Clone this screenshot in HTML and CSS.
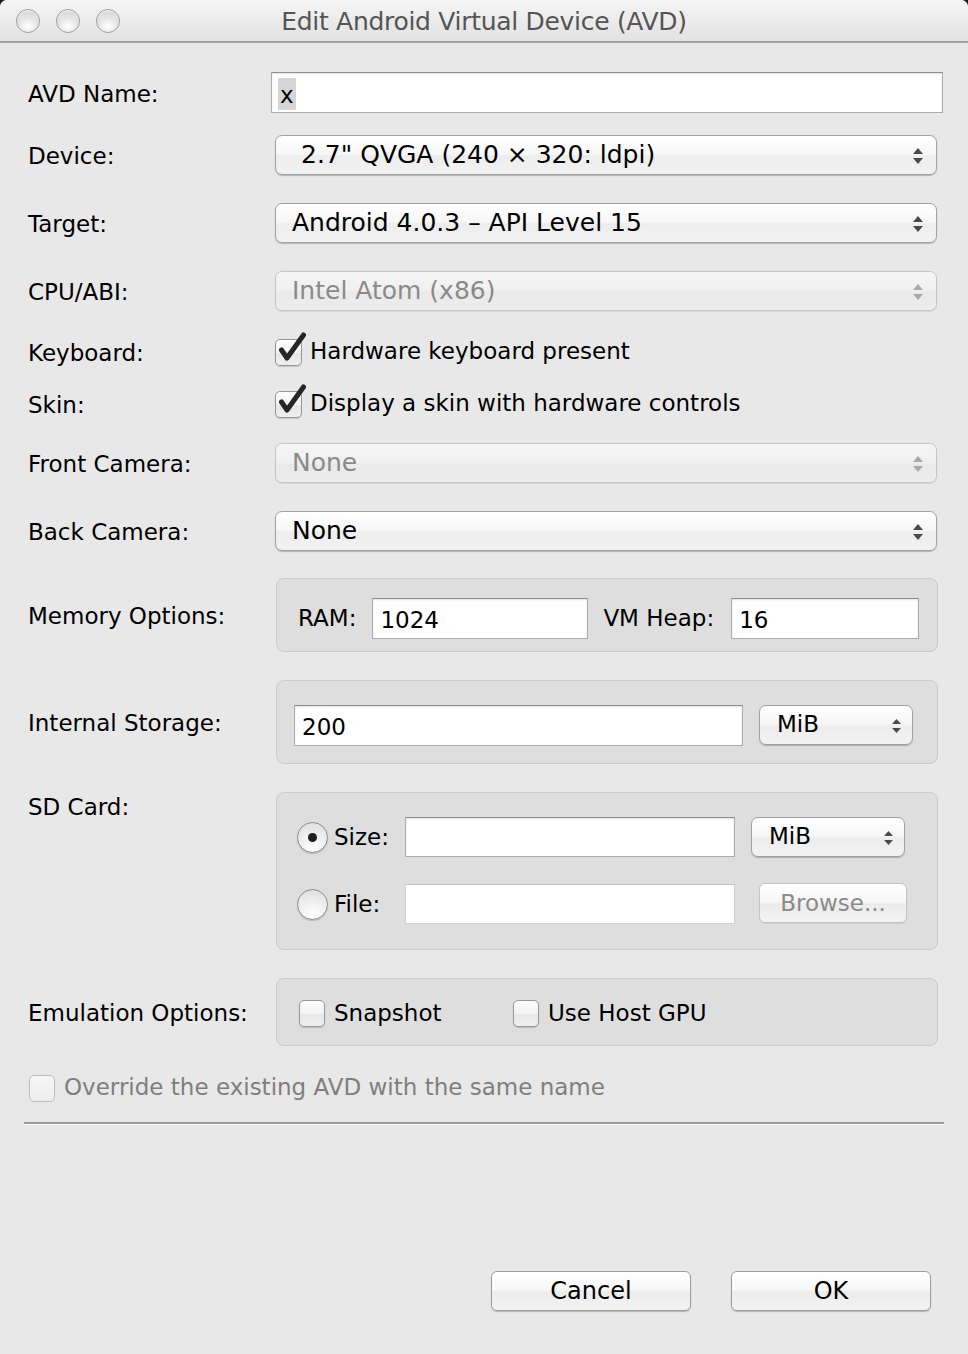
FILE: index.html
```html
<!DOCTYPE html>
<html>
<head>
<meta charset="utf-8">
<link rel="stylesheet" href="styles.css">
</head>
<body>
<div class="window">
  <div class="titlebar">
    <div class="lights"><span class="light"></span><span class="light"></span><span class="light"></span></div>
    <div class="title">Edit Android Virtual Device (AVD)</div>
  </div>
  <div class="content">
    <div class="row r-name">
      <div class="label">AVD Name:</div>
      <div class="field field-name"><span class="sel">x</span></div>
    </div>
    <div class="row r-device">
      <div class="label">Device:</div>
      <div class="select pad-device"><span class="stext">2.7" QVGA (240 × 320: ldpi)</span><svg class="arrows" width="10" height="16" viewBox="0 0 10 16"><path d="M5 0 L10 6 L0 6 Z M0 10 L10 10 L5 16 Z" fill="#4a4a4a"/></svg></div>
    </div>
    <div class="row r-target">
      <div class="label">Target:</div>
      <div class="select"><span class="stext">Android 4.0.3 – API Level 15</span><svg class="arrows" width="10" height="16" viewBox="0 0 10 16"><path d="M5 0 L10 6 L0 6 Z M0 10 L10 10 L5 16 Z" fill="#4a4a4a"/></svg></div>
    </div>
    <div class="row r-cpu">
      <div class="label">CPU/ABI:</div>
      <div class="select disabled"><span class="stext">Intel Atom (x86)</span><svg class="arrows" width="10" height="16" viewBox="0 0 10 16"><path d="M5 0 L10 6 L0 6 Z M0 10 L10 10 L5 16 Z" fill="#a9a9a9"/></svg></div>
    </div>
    <div class="row r-kbd">
      <div class="label">Keyboard:</div>
      <div class="check-item ci-checked"><span class="cbox checked"><svg class="tick" width="32" height="34" viewBox="0 0 32 34"><path d="M5.5 19 L11 27 L27.5 4" fill="none" stroke="#262626" stroke-width="5" stroke-linecap="round" stroke-linejoin="round"/></svg></span><span class="ctext">Hardware keyboard present</span></div>
    </div>
    <div class="row r-skin">
      <div class="label">Skin:</div>
      <div class="check-item ci-checked"><span class="cbox checked"><svg class="tick" width="32" height="34" viewBox="0 0 32 34"><path d="M5.5 19 L11 27 L27.5 4" fill="none" stroke="#262626" stroke-width="5" stroke-linecap="round" stroke-linejoin="round"/></svg></span><span class="ctext">Display a skin with hardware controls</span></div>
    </div>
    <div class="row r-front">
      <div class="label">Front Camera:</div>
      <div class="select disabled"><span class="stext">None</span><svg class="arrows" width="10" height="16" viewBox="0 0 10 16"><path d="M5 0 L10 6 L0 6 Z M0 10 L10 10 L5 16 Z" fill="#a9a9a9"/></svg></div>
    </div>
    <div class="row r-back">
      <div class="label">Back Camera:</div>
      <div class="select"><span class="stext">None</span><svg class="arrows" width="10" height="16" viewBox="0 0 10 16"><path d="M5 0 L10 6 L0 6 Z M0 10 L10 10 L5 16 Z" fill="#4a4a4a"/></svg></div>
    </div>
    <div class="row r-mem">
      <div class="label">Memory Options:</div>
      <div class="group g-mem">
        <span class="glabel">RAM:</span>
        <div class="field f-ram">1024</div>
        <span class="glabel l-heap">VM Heap:</span>
        <div class="field f-heap">16</div>
      </div>
    </div>
    <div class="row r-int">
      <div class="label">Internal Storage:</div>
      <div class="group g-int">
        <div class="field f-int">200</div>
        <div class="select small"><span class="stext">MiB</span><svg class="arrows" width="9" height="14" viewBox="0 0 9 14"><path d="M4.5 0 L9 5 L0 5 Z M0 9 L9 9 L4.5 14 Z" fill="#4a4a4a"/></svg></div>
      </div>
    </div>
    <div class="row r-sd">
      <div class="label l-top">SD Card:</div>
      <div class="group g-sd">
        <div class="sd-row">
          <span class="radio on"></span>
          <span class="glabel rl">Size:</span>
          <div class="field f-sd"></div>
          <div class="select small sd-sel"><span class="stext">MiB</span><svg class="arrows" width="9" height="14" viewBox="0 0 9 14"><path d="M4.5 0 L9 5 L0 5 Z M0 9 L9 9 L4.5 14 Z" fill="#4a4a4a"/></svg></div>
        </div>
        <div class="sd-row sd-row2">
          <span class="radio"></span>
          <span class="glabel rl">File:</span>
          <div class="field f-sd f-file"></div>
          <div class="button browse">Browse...</div>
        </div>
      </div>
    </div>
    <div class="row r-emu">
      <div class="label">Emulation Options:</div>
      <div class="group g-emu">
        <div class="check-item ci-snap"><span class="cbox"></span><span class="ctext">Snapshot</span></div>
        <div class="check-item"><span class="cbox"></span><span class="ctext">Use Host GPU</span></div>
      </div>
    </div>
    <div class="override">
      <span class="cbox dis"></span><span class="ctext grey">Override the existing AVD with the same name</span>
    </div>
    <div class="separator"></div>
    <div class="buttons">
      <div class="button big">Cancel</div>
      <div class="button big">OK</div>
    </div>
  </div>
</div>
</body>
</html>
```
FILE: styles.css
```css
html { background: #1a1a1a; }
body {
  margin: 0;
  font-family: "DejaVu Sans", "Liberation Sans", sans-serif;
  color: #000;
}
.window {
  width: 968px;
  height: 1354px;
  background: #e8e8e8;
  border-radius: 7px 7px 0 0;
  overflow: hidden;
}
.titlebar {
  height: 41px;
  border-bottom: 2px solid #a3a3a3;
  background: linear-gradient(#f5f5f5, #e2e2e2);
  display: flex;
  align-items: center;
  position: relative;
}
.lights {
  display: flex;
  gap: 16px;
  padding-left: 16px;
  margin-top: 1px;
}
.light {
  width: 24px;
  height: 24px;
  box-sizing: border-box;
  border-radius: 50%;
  border: 1px solid #9f9f9f;
  background: radial-gradient(circle at 50% 75%, #ffffff 0%, #e6e6e6 45%, #cfcfcf 100%);
  box-shadow: inset 0 1px 1px rgba(255,255,255,.9);
}
.title {
  position: absolute;
  left: 0;
  right: 0;
  top: 7px;
  text-align: center;
  font-size: 25px;
  color: #555555;
  letter-spacing: -0.3px;
}
.content {
  padding: 0 31px 0 28px;
}
.row {
  display: grid;
  grid-template-columns: 247px 1fr;
  align-items: center;
}
.label {
  font-size: 23px;
  white-space: nowrap;
  padding-top: 2px;
}
.l-top { align-self: start; margin-top: 0; }
.r-name { margin-top: 29px; height: 41px; }
.r-device { margin-top: 22px; height: 40px; }
.r-target { margin-top: 28px; height: 40px; }
.r-cpu { margin-top: 28px; height: 40px; }
.r-kbd { margin-top: 26px; height: 29px; }
.r-skin { margin-top: 23px; height: 29px; }
.r-front { margin-top: 25px; height: 40px; }
.r-back { margin-top: 28px; height: 40px; }
.r-mem { margin-top: 27px; height: 74px; }
.r-int { margin-top: 28px; height: 84px; }
.r-sd { margin-top: 28px; height: 158px; }
.r-emu { margin-top: 28px; height: 68px; }

.field {
  box-sizing: border-box;
  height: 41px;
  background: #fff;
  border: 1px solid #acacac;
  border-top-color: #8e8e8e;
  box-shadow: inset 0 1px 2px rgba(0,0,0,.12);
  font-size: 23px;
  display: flex;
  align-items: center;
  padding-left: 7px;
  padding-top: 3px;
}
.field-name {
  margin-left: -4px;
  margin-right: -6px;
  height: 41px;
  padding-left: 6px;
}
.sel {
  background: #d5d5d5;
  padding: 2px 2px 0;
  line-height: 30px;
}
.select {
  box-sizing: border-box;
  height: 40px;
  border: 1px solid #a2a2a2;
  border-radius: 7px;
  background: linear-gradient(#ffffff 0%, #f7f7f7 48%, #ededed 52%, #f2f2f2 100%);
  box-shadow: 0 1px 1px rgba(0,0,0,.22);
  display: flex;
  align-items: center;
  padding: 0 13px 0 16px;
  font-size: 25px;
}
.pad-device { padding-left: 25px; }
.stext { flex: 1; white-space: nowrap; margin-top: -2px; }
.arrows { flex: none; margin-top: 1px; }
.select.disabled {
  color: #8a8a8a;
  border-color: #c6c6c6;
  background: linear-gradient(#f5f5f5 0%, #f0f0f0 50%, #eaeaea 52%, #ededed 100%);
  box-shadow: 0 1px 1px rgba(0,0,0,.08);
}
.select.small {
  font-size: 23px;
  padding: 0 11px 0 17px;
  width: 154px;
  height: 40px;
}

.check-item {
  display: flex;
  align-items: center;
}
.ci-checked { height: 29px; }
.cbox {
  position: relative;
  flex: none;
  width: 27px;
  height: 27px;
  box-sizing: border-box;
  border: 1px solid #979797;
  border-radius: 5px;
  background: linear-gradient(#ffffff, #f3f3f3 50%, #e6e6e6 52%, #efefef);
  box-shadow: 0 1px 1px rgba(0,0,0,.15);
}
.cbox.checked { align-self: flex-end; }
.ci-checked .ctext { margin-top: -1px; }
.tick {
  position: absolute;
  left: 0;
  top: -9px;
}
.ctext {
  font-size: 23px;
  margin-left: 8px;
  white-space: nowrap;
}

.group {
  box-sizing: border-box;
  height: 100%;
  margin-left: 1px;
  margin-right: -1px;
  background: #dedede;
  border: 1px solid #cbcbcb;
  border-radius: 8px;
}
.glabel { font-size: 23px; white-space: nowrap; }
.g-mem {
  display: flex;
  align-items: center;
  padding: 6px 0 0 21px;
}
.f-ram { width: 216px; margin-left: 16px; }
.l-heap { margin-left: 15px; }
.f-heap { width: 188px; margin-left: 17px; }
.g-int {
  display: flex;
  align-items: center;
  padding: 6px 0 0 17px;
}
.f-int { width: 449px; }
.g-int .select.small { margin-left: 16px; }
.g-sd {
  padding: 24px 0 0 20px;
}
.sd-row {
  display: flex;
  align-items: center;
  height: 40px;
}
.sd-row2 { margin-top: 27px; }
.radio {
  flex: none;
  width: 31px;
  height: 31px;
  box-sizing: border-box;
  border-radius: 50%;
  border: 1px solid #8f8f8f;
  background: radial-gradient(circle at 50% 85%, #ffffff 0%, #f0f0f0 45%, #dadada 100%);
  box-shadow: 0 1px 1px rgba(0,0,0,.18);
  position: relative;
}
.radio.on::after {
  content: "";
  position: absolute;
  left: 10px;
  top: 10px;
  width: 9px;
  height: 9px;
  border-radius: 50%;
  background: #1e1e1e;
}
.rl { margin-left: 6px; width: 71px; }
.f-sd { width: 330px; height: 40px; }
.f-file { border-color: #cfcfcf; border-top-color: #c0c0c0; box-shadow: none; }
.sd-sel { margin-left: 16px; }
.button {
  box-sizing: border-box;
  border: 1px solid #9d9d9d;
  border-radius: 6px;
  background: linear-gradient(#ffffff 0%, #f7f7f7 48%, #ececec 52%, #f3f3f3 100%);
  box-shadow: 0 1px 1px rgba(0,0,0,.22);
  display: flex;
  align-items: center;
  justify-content: center;
  white-space: nowrap;
}
.browse {
  margin-left: 24px;
  width: 148px;
  height: 40px;
  margin-top: -2px;
  font-size: 23px;
  color: #8a8a8a;
  border-color: #c3c3c3;
  box-shadow: 0 1px 1px rgba(0,0,0,.08);
}
.g-emu {
  display: flex;
  align-items: center;
  padding: 2px 0 0 22px;
}
.g-emu .cbox { width: 26px; height: 27px; }
.g-emu .ctext { margin-left: 9px; }
.ci-snap { width: 214px; }
.override {
  display: flex;
  align-items: center;
  margin-top: 29px;
  margin-left: 1px;
  height: 27px;
}
.cbox.dis {
  width: 26px;
  height: 27px;
  border-color: #bdbdbd;
  background: linear-gradient(#f6f6f6, #eeeeee);
  box-shadow: none;
}
.override .ctext { margin-left: 9px; margin-top: -3px; }
.grey { color: #7f7f7f; }
.separator {
  margin: 20px -7px 0 -4px;
  height: 2px;
  background: #9c9c9c;
  border-bottom: 1px solid #ffffff;
}
.buttons {
  display: flex;
  justify-content: flex-end;
  gap: 40px;
  margin-top: 146px;
  margin-right: 6px;
}
.button.big {
  width: 200px;
  height: 40px;
  font-size: 24px;
}
```
